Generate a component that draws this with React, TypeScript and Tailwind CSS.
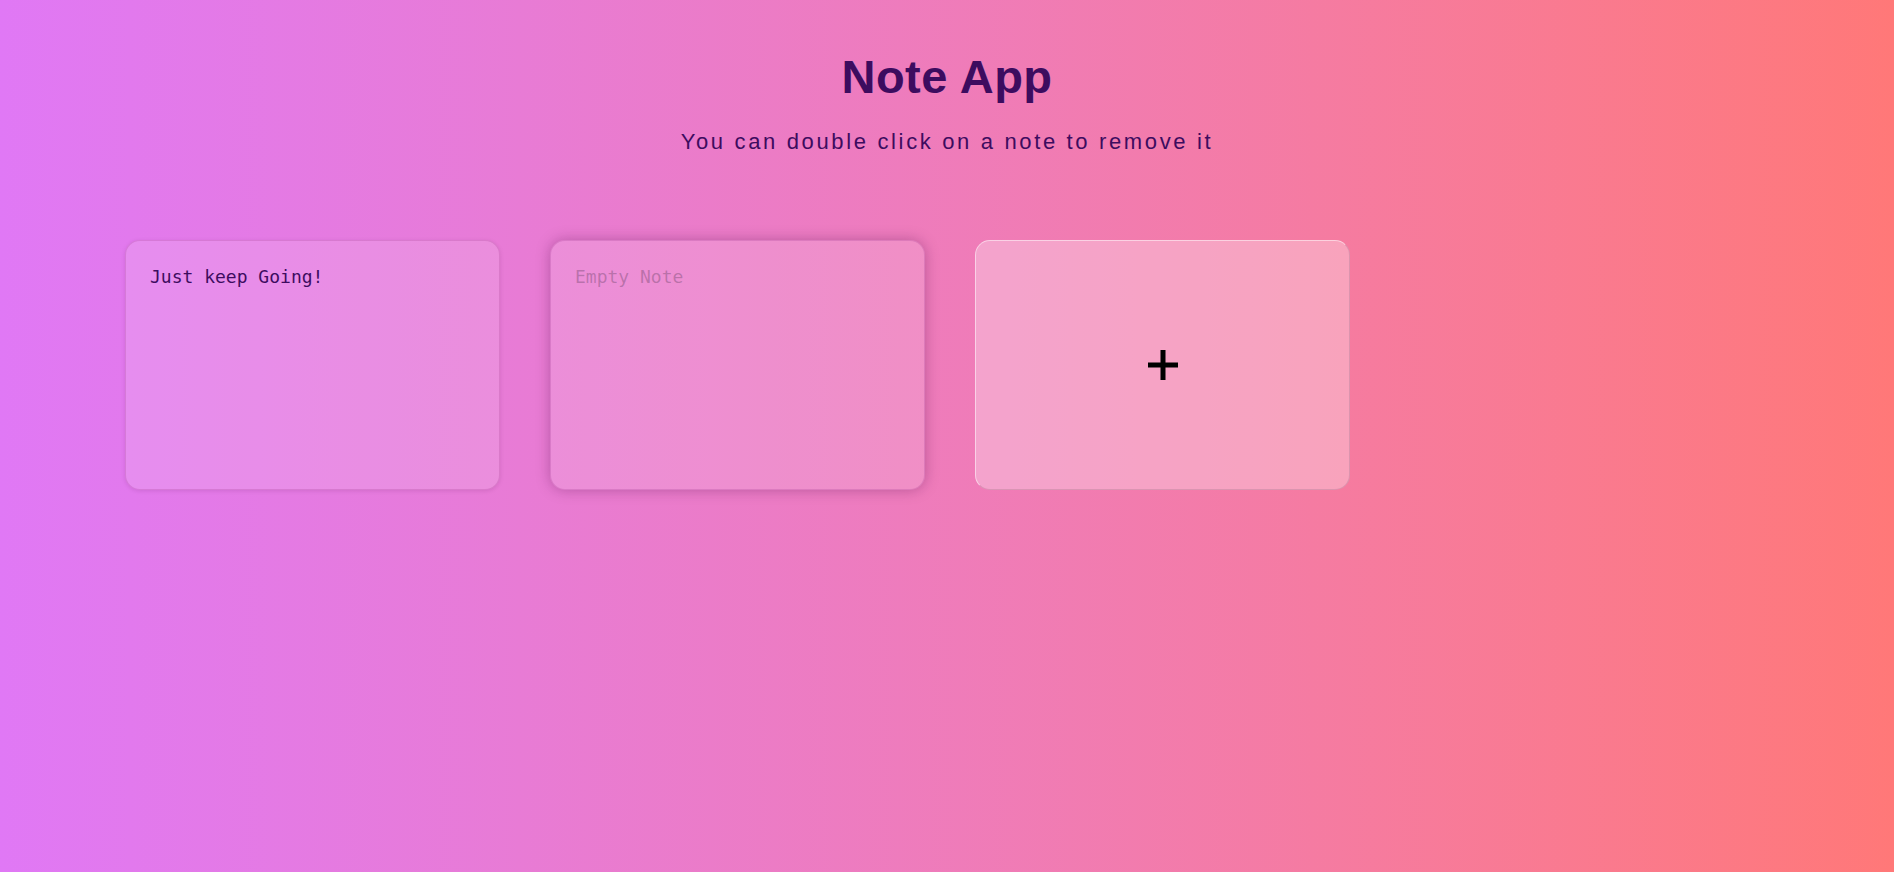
import { useState } from 'react';

export default function App() {
    const [notes] = useState([
        { id: 1, text: 'Just keep Going!' },
        { id: 2, text: '' },
    ]);

    return (
        <div className="min-h-screen w-full bg-gradient-to-r from-[#e078f5] to-[#ff7878] font-['Liberation_Sans',Arial,sans-serif]">
            <div className="pt-[49px] text-center">
                <h1 className="text-[47px] leading-[55px] font-bold text-[#3d0c5f] tracking-[0.5px]">Note App</h1>
                <p className="mt-[25px] text-[22px] leading-[25px] text-[#3d0c5f] tracking-[2.65px]">
                    You can double click on a note to remove it
                </p>
            </div>

            {/* Notes */}
            <div className="flex gap-[50px] pl-[125px] pt-[86px]">
                {notes.map((note, i) => (
                    <textarea
                        key={note.id}
                        defaultValue={note.text}
                        placeholder="Empty Note"
                        className={
                            i === 1
                                ? "w-[375px] h-[250px] resize-none rounded-[15px] bg-white/15 px-[24px] pt-[22px] font-['DejaVu_Sans_Mono',monospace] text-[18px] text-[#3d0c5f] placeholder:text-[#5a3a5a]/35 outline-none border border-[#b04ca0]/30 shadow-[0_0_14px_rgba(90,20,80,0.35)]"
                                : "w-[375px] h-[250px] resize-none rounded-[15px] bg-white/15 px-[24px] pt-[22px] font-['DejaVu_Sans_Mono',monospace] text-[18px] text-[#3d0c5f] placeholder:text-[#5a3a5a]/35 outline-none border border-[#b04ca0]/30 shadow-[0_1px_4px_rgba(90,20,80,0.15)]"
                        }
                    />
                ))}
                <button className="w-[375px] h-[250px] rounded-[15px] bg-white/30 border border-white/50 border-r-[#c98aa6]/60 border-b-[#c98aa6]/60 flex items-center justify-center">
                    <svg width="30" height="30" viewBox="0 0 30 30">
                        <path d="M15 0v30M0 15h30" stroke="#000" strokeWidth="5" />
                    </svg>
                </button>
            </div>
        </div>
    );
}
